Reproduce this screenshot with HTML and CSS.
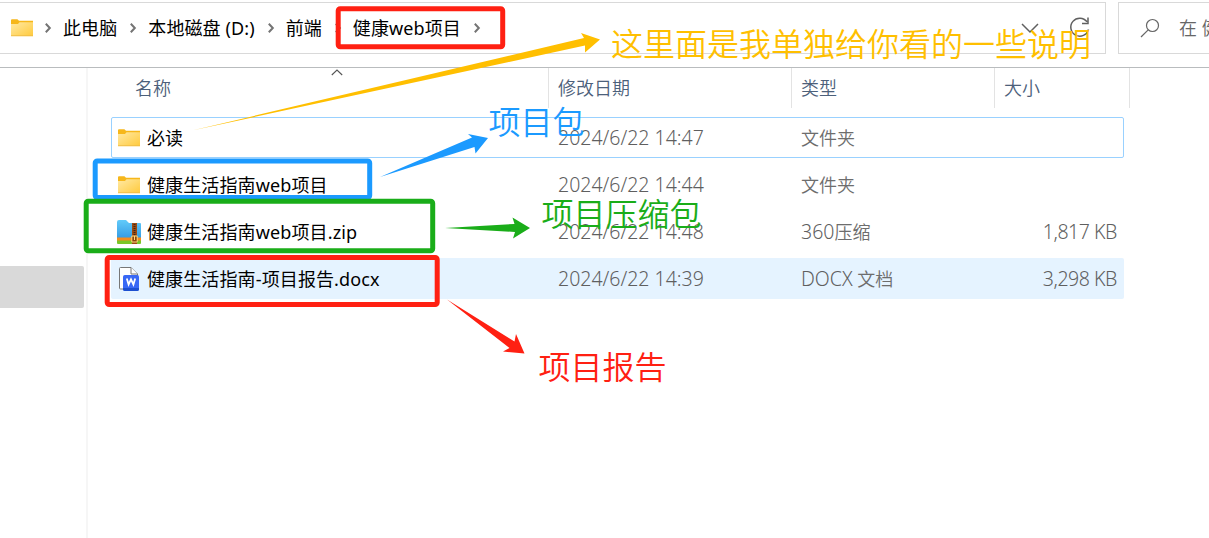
FILE: index.html
```html
<!DOCTYPE html>
<html lang="zh-CN">
<head>
<meta charset="utf-8">
<title>健康web项目</title>
<link rel="stylesheet" href="styles.css">
</head>
<body>
<svg class="defs" width="0" height="0">
  <defs>
    <linearGradient id="fold" x1="0" y1="0" x2="1" y2="1"><stop offset="0" stop-color="#ffe9a4"/><stop offset="1" stop-color="#ffca3c"/></linearGradient>
    <linearGradient id="zipblue" x1="0" y1="0" x2="0" y2="1"><stop offset="0" stop-color="#62cbfa"/><stop offset="1" stop-color="#2f94df"/></linearGradient>
    <symbol id="folder" viewBox="0 0 22 18">
      <path d="M0 1.2Q0 .3 1 .3H6.4L8 1.8H22V17H0Z" fill="#f6b71b"/>
      <path d="M0 5H7L8.5 3.3H22V17.2H0Z" fill="url(#fold)"/>
      <path d="M0 16.6H22" stroke="#eebd49" stroke-width=".8"/>
    </symbol>
    <symbol id="chev" viewBox="0 0 8 12"><path d="M1.8 1.8 5.8 6 1.8 10.2" fill="none" stroke="#747474" stroke-width="2"/></symbol>
  </defs>
</svg>
<div class="window">
  <div class="toolbar">
    <div class="address">
      <svg class="icon-folder"><use href="#folder"/></svg>
      <svg class="chev c1"><use href="#chev"/></svg>
      <span>此电脑</span>
      <svg class="chev c2"><use href="#chev"/></svg>
      <span>本地磁盘 (D:)</span>
      <svg class="chev c2"><use href="#chev"/></svg>
      <span>前端</span>
      <svg class="chev c2"><use href="#chev"/></svg>
      <span>健康web项目</span>
      <svg class="chev c3"><use href="#chev"/></svg>
      <svg class="actions" width="72" height="26" viewBox="0 0 72 26" fill="none" stroke="#606060" stroke-width="1.5">
        <path d="M2 9 10 17 18 9"/>
        <path d="M67 6.8A9 9 0 1 0 68.5 14.5M68 2.5V8.5H62"/>
      </svg>
    </div>
    <div class="search">
      <svg width="20" height="20" viewBox="0 0 20 20" fill="none" stroke="#666" stroke-width="1.2"><circle cx="12.5" cy="7.5" r="6"/><path d="M8.2 11.8 1 19"/></svg>
      <span>在 健</span>
    </div>
  </div>
  <div class="main">
    <div class="sidebar"><div class="selected"></div></div>
    <div class="files">
      <div class="grid head">
        <div class="name">名称<svg class="sort" width="12" height="7" viewBox="0 0 12 7"><path d="M.8 6 6 1 11.2 6" fill="none" stroke="#555" stroke-width="1.1"/></svg></div>
        <div>修改日期</div><div>类型</div><div>大小</div>
      </div>
      <div class="rows">
        <div class="grid row focused">
          <div class="name"><svg class="icon-folder"><use href="#folder"/></svg><span>必读</span></div>
          <div class="date">2024/6/22 14:47</div><div>文件夹</div><div></div>
        </div>
        <div class="grid row">
          <div class="name"><svg class="icon-folder"><use href="#folder"/></svg><span>健康生活指南web项目</span></div>
          <div class="date">2024/6/22 14:44</div><div>文件夹</div><div></div>
        </div>
        <div class="grid row">
          <div class="name">
            <svg class="icon-file" viewBox="0 0 24 24">
              <path d="M0 2Q0 0 2 0H9L12 3H23Q24 3 24 4V21H0Z" fill="url(#zipblue)"/>
              <path d="M0 17.5H24V21H0Z" fill="#f58b1d"/><path d="M0 20.5H24V23Q24 24 23 24H1Q0 24 0 23Z" fill="#7ac728"/>
              <path d="M15 3H20V24H15Z" fill="#9b4b12"/><path d="M17.5 4V15" stroke="#402718" stroke-width="2" stroke-dasharray="1 1"/>
              <path d="M14.8 16H20.2V22H14.8ZM17.5 16V20" fill="#8c420d" stroke="#ffdc7c" stroke-width="1"/>
            </svg><span>健康生活指南web项目.zip</span></div>
          <div class="date">2024/6/22 14:48</div><div><i class="num">360</i>压缩</div><div class="size">1,817 KB</div>
        </div>
        <div class="grid row hover">
          <div class="name">
            <svg class="icon-file" viewBox="0 0 24 24">
              <path d="M2.5 1.5Q2.5.5 3.5.5H14L20.5 7V22H3.5Q2.5 22 2.5 21Z" fill="#fff" stroke="#777"/>
              <path d="M14 .5V7H20.5" fill="#fff" stroke="#777"/>
              <rect x="6" y="8" width="16" height="16" rx="1.8" fill="#3868f5"/><path d="M6 21H22V22.2Q22 24 20.2 24H7.8Q6 24 6 22.2Z" fill="#1d4fd0"/>
              <path d="M9.8 11.5 11.6 17.5 14 12.4 16.4 17.5 18.2 11.5" fill="none" stroke="#fff" stroke-width="1.8"/>
            </svg><span>健康生活指南-项目报告.docx</span></div>
          <div class="date">2024/6/22 14:39</div><div><i class="num">DOCX</i> 文档</div><div class="size">3,298 KB</div>
        </div>
      </div>
    </div>
  </div>
  <svg class="markup" width="1209" height="538" viewBox="0 0 1209 538">
    <g fill="none" stroke-width="5">
      <rect class="s-red" x="338.2" y="8.8" width="164.5" height="38" rx="2"/>
      <rect class="s-blue" x="95.2" y="161" width="274.5" height="36.5" rx="2"/>
      <rect class="s-green" x="86.2" y="201.2" width="346.5" height="49.5" rx="2"/>
      <rect class="s-red" x="107.2" y="257.5" width="330" height="47" rx="2"/>
    </g>
    <path class="f-yellow" d="M192 130.5 584 38 581 33 600 39.5 585 52.5 585 45.5Z"/>
    <path class="f-blue" d="M380 177 472 137.5 468 134 488 138 475.5 153.5 474.5 147Z"/>
    <path class="f-green" d="M445 228 514.5 224 512.5 217.5 530 228 513 238.5 515 232Z"/>
    <path class="f-red" d="M447 299.5 514.5 341.5 516 334 524.5 353.5 503 351.5 509.5 348Z"/>
    <g class="notes">
      <text class="f-yellow" x="611" y="56">这里面是我单独给你看的一些说明</text>
      <text class="f-blue" x="488.5" y="134">项目包</text>
      <text class="f-green" x="541.5" y="226">项目压缩包</text>
      <text class="f-red" x="538.5" y="379">项目报告</text>
    </g>
  </svg>
</div>
</body>
</html>
```

FILE: styles.css
```css
* { box-sizing: border-box; }
body { margin: 0; background: #fff; overflow: hidden; }
.defs { position: absolute; }
.window {
  position: relative;
  display: flex;
  flex-direction: column;
  width: 1209px;
  height: 538px;
  overflow: hidden;
  font: 350 18px/26px "Noto Sans", "Noto Sans CJK SC", sans-serif;
  color: #000;
}
.toolbar {
  display: flex;
  flex: none;
  gap: 12px;
  height: 68px;
  padding: 2px 0 14px;
  border-bottom: 1px solid #b9bcbe;
}
.address, .search {
  display: flex;
  flex: none;
  align-items: center;
  height: 52px;
  border: 1px solid #d9d9d9;
  white-space: nowrap;
}
.address { width: 1106px; border-left: 0; padding-left: 11px; font-weight: 400; letter-spacing: 0.1px; }
.search { width: 120px; padding-left: 21px; color: #666; }
.search span { margin-left: 19px; }
.icon-folder { flex: none; width: 22px; height: 18px; }
.chev { flex: none; width: 8px; height: 12px; }
.c1 { margin: 0 11px; }
.c2 { margin: 0 11px 0 12px; }
.c3 { margin-left: 12px; }
.actions { margin: 0 13px 0 auto; }
.main { display: flex; flex: 1; }
.sidebar { width: 88px; padding-top: 198px; border-right: 2px solid #f6f6f6; }
.selected { width: 84px; height: 42px; background: #d9d9d9; border-radius: 0 2px 2px 0; }
.files { padding-left: 23px; }
.grid { display: grid; grid-template-columns: 438px 243px 203px 135px; }
.head { height: 40px; color: #4c607a; }
.head > div { padding: 7px 0 0 9px; border-right: 1px solid #e3e3e3; }
.head .name { position: relative; padding-left: 24px; }
.sort { position: absolute; left: 220px; top: 1px; }
.rows { display: flex; flex-direction: column; gap: 6px; padding-top: 9px; }
.row {
  width: 1013px;
  height: 41px;
  grid-template-columns: 436px 243px 203px 1fr;
  align-items: center;
  border: 1px solid transparent;
  border-radius: 2px;
  color: #6d6d6d;
}
.row > div { padding-left: 10px; white-space: nowrap; }
.row .name { display: flex; align-items: center; padding-left: 6px; color: #000; font-weight: 400; letter-spacing: 0.12px; }
.row .name span { margin-left: 7px; }
.row .icon-file { flex: none; width: 24px; height: 24px; margin: 0 -1px 0 -1px; }
.focused { border-color: #99d1ff; }
.hover { background: #e5f3ff; }
.row .date, .row .size, .num { font-size: 19.5px; font-weight: 300; color: #5f5f5f; letter-spacing: 0; }
.num { font-style: normal; }
.row .size { padding: 0 6px 0 0; text-align: right; letter-spacing: -0.45px; }
.markup { position: absolute; left: 0; top: 0; }
.notes { font: 350 32px "Noto Sans CJK SC", sans-serif; }
.s-red { stroke: #ff2012; }
.s-blue { stroke: #1b9aff; }
.s-green { stroke: #1aad19; }
.f-red { fill: #ff2012; }
.f-blue { fill: #1b9aff; }
.f-green { fill: #1aad19; }
.f-yellow { fill: #ffbf00; }
```
